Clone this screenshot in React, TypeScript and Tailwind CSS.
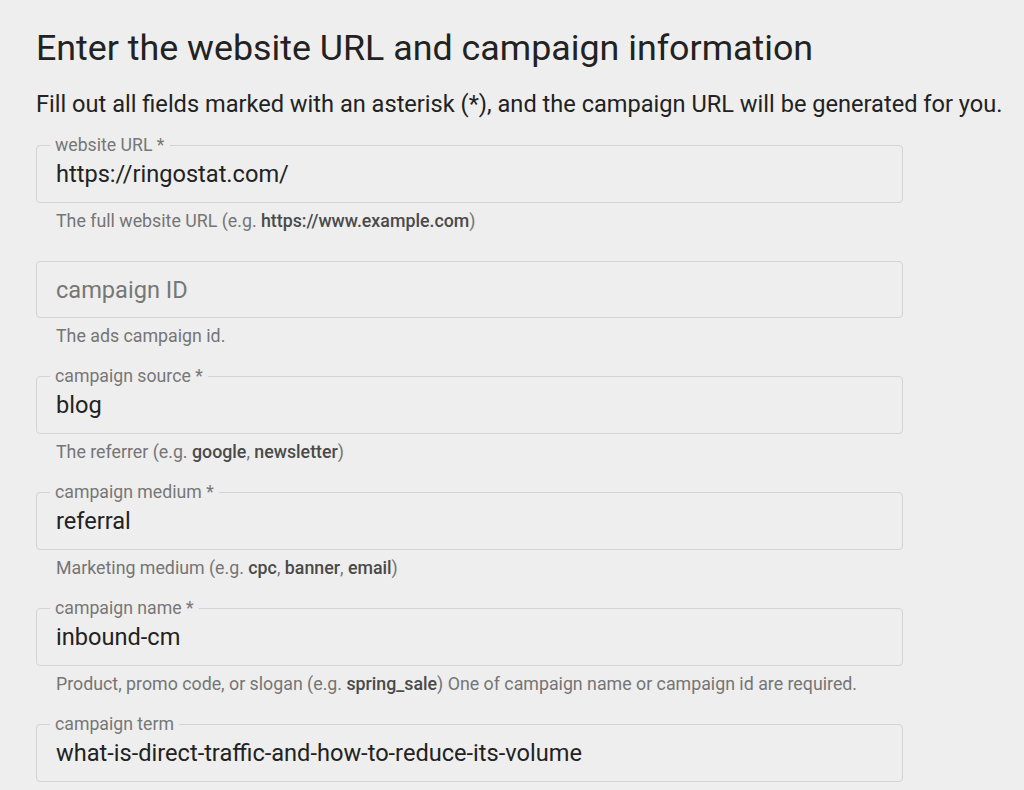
import React from "react";

type Field = {
  label?: string;
  value?: string;
  placeholder?: string;
  helper?: React.ReactNode;
};

const B = ({ children }: { children: React.ReactNode }) => (
  <b className="font-medium text-[#4a4a4a]">{children}</b>
);

const fields: Field[] = [
  {
    label: "website URL *",
    value: "https://ringostat.com/",
    helper: (
      <>
        The full website URL (e.g. <B>https://www.example.com</B>)
      </>
    ),
  },
  {
    placeholder: "campaign ID",
    helper: <>The ads campaign id.</>,
  },
  {
    label: "campaign source *",
    value: "blog",
    helper: (
      <>
        The referrer (e.g. <B>google</B>, <B>newsletter</B>)
      </>
    ),
  },
  {
    label: "campaign medium *",
    value: "referral",
    helper: (
      <>
        Marketing medium (e.g. <B>cpc</B>, <B>banner</B>, <B>email</B>)
      </>
    ),
  },
  {
    label: "campaign name *",
    value: "inbound-cm",
    helper: (
      <>
        Product, promo code, or slogan (e.g. <B>spring_sale</B>) One of campaign name or campaign id are required.
      </>
    ),
  },
  {
    label: "campaign term",
    value: "what-is-direct-traffic-and-how-to-reduce-its-volume",
  },
];

function OutlinedField({ label, value, placeholder, helper }: Field) {
  return (
    <div className="flex flex-col">
      {label ? (
        <fieldset className="m-0 w-[867px] rounded-[4px] border border-[#d3d3d3] px-[13px] pt-0 pb-[16px]">
          <legend className="px-[5px] text-[17.7px] leading-[16px] text-[#777]">{label}</legend>
          <div className="mt-[9px] h-[24px] px-[6px] text-[23.6px] leading-[24px] text-[#222]">{value}</div>
        </fieldset>
      ) : (
        <div className="mt-[8px] flex h-[57px] w-[867px] items-center rounded-[4px] border border-[#d3d3d3] px-[19px]">
          <span className="text-[23.6px] leading-[24px] text-[#777]">{placeholder}</span>
        </div>
      )}
      {helper && (
        <p className="mt-[8px] h-[20px] pl-[20px] text-[17.8px] leading-[20px] text-[#757575]">{helper}</p>
      )}
    </div>
  );
}

export default function App() {
  return (
    <div
      className="min-h-[790px] w-[1024px] bg-[#eeeeee] pl-[36px] pt-[24px]"
      style={{ fontFamily: "Roboto, 'Liberation Sans', sans-serif" }}
    >
      <h1 className="text-[35.8px] leading-[48px] font-normal text-[#222]">
        Enter the website URL and campaign information
      </h1>
      <p className="mt-[18px] text-[23.6px] leading-[28px] text-[#222]">
        Fill out all fields marked with an asterisk (*), and the campaign URL will be generated for you.
      </p>
      <div className="mt-[19px] flex flex-col gap-[22px]">
        {fields.map((f, i) => (
          <OutlinedField key={i} {...f} />
        ))}
      </div>
    </div>
  );
}
